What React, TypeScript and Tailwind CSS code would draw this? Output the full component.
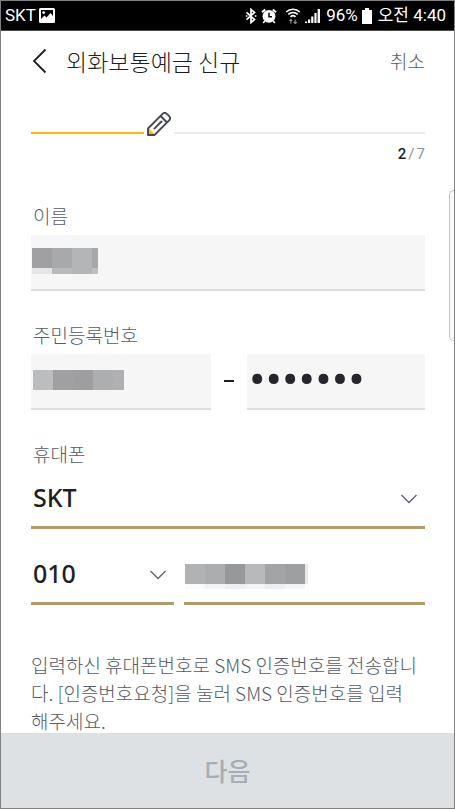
import { useState } from 'react';
import type { ReactNode } from 'react';

interface MosaicProps {
  rows: { height: string; cells: string[] }[];
}

// Pixelated blocks that hide personal data in a field
function Mosaic({ rows }: MosaicProps) {
  return (
    <span className="flex flex-col shrink-0" aria-hidden="true">
      {rows.map((row, i) => (
        <span key={i} className={`flex ${row.height}`}>
          {row.cells.map((cell, j) => (
            <span key={j} className={`h-full ${cell}`} />
          ))}
        </span>
      ))}
    </span>
  );
}

const nameMosaic = [
  { height: 'h-5', cells: ['w-5 bg-[#a0a0a2]', 'w-5 bg-[#a8a9ab]', 'w-5 bg-[#b4b5b7]', 'w-1.5 bg-[#a7a8aa]'] },
  { height: 'h-1.5', cells: ['w-5 bg-[#e5e5e5]', 'w-5 bg-[#b9babc]', 'w-5 bg-[#b4b5b7]', 'w-1.5 bg-[#bebfc1]'] },
];

const idMosaic = [
  {
    height: 'h-5',
    cells: ['w-5 bg-[#bcbdbf]', 'w-5 bg-[#a0a0a2]', 'w-5 bg-[#9e9ea0]', 'w-5 bg-[#adaeb0]', 'w-[11px] bg-[#b0b0b2]'],
  },
];

const phoneMosaic = [
  {
    height: 'h-5',
    cells: [
      'w-5 bg-[#b1b2b4]',
      'w-5 bg-[#acadaf]',
      'w-5 bg-[#979899]',
      'w-5 bg-[#b8b9bb]',
      'w-5 bg-[#a3a4a6]',
      'w-5 bg-[#9e9fa0]',
      'w-[3px] bg-[#e8e9e9]',
    ],
  },
  {
    height: 'h-[5px]',
    cells: [
      'w-5 bg-[#fafafa]',
      'w-5 bg-[#f4f4f4]',
      'w-5 bg-[#eeeeee]',
      'w-5 bg-[#f3f3f3]',
      'w-5 bg-[#eeeeee]',
      'w-5 bg-[#f4f4f4]',
    ],
  },
];

function StatusBar() {
  return (
    <div className="h-[30px] shrink-0 bg-black border-b border-[#4a4a4a] text-white flex items-center justify-between pl-1 pr-2 text-[17px] font-[Roboto,'Noto_Sans_CJK_KR',sans-serif] whitespace-nowrap">
      <div className="flex items-center gap-[3px]">
        <span>SKT</span>
        <svg width="16" height="15" viewBox="0 0 16 15">
          <path
            fill="#fff"
            fillRule="evenodd"
            d="M1.5 0h13A1.5 1.5 0 0 1 16 1.5v12a1.5 1.5 0 0 1-1.5 1.5h-13A1.5 1.5 0 0 1 0 13.5v-12A1.5 1.5 0 0 1 1.5 0zM2 2v9l3.500-3.500 2 2 4-4.500 2.500 3V2z"
          />
          <circle cx="4.700" cy="4.600" r="1.400" fill="#fff" />
        </svg>
      </div>
      <div className="flex items-center gap-1">
        <svg width="12" height="16" viewBox="0 0 12 16" fill="none" stroke="#fff" strokeWidth="1.700">
          <path d="M1.500 4.300l8 7.200L6 14.600V1.400l3.500 3.100-8 7.200" />
          <path d="M.8 8h1.600M9.800 8h1.600" />
        </svg>
        <svg width="16" height="16" viewBox="0 0 16 16" fill="none" stroke="#fff">
          <circle cx="8" cy="8.300" r="6.400" fill="#fff" stroke="none" />
          <path d="M1 4.200L4.200 1.400M15 4.200l-3.200-2.800" strokeWidth="2" />
          <path d="M3.800 13l-1.600 2M12.200 13l1.600 2" strokeWidth="1.600" />
          <path d="M8 4.800v3.900h3" stroke="#000" strokeWidth="1.500" />
        </svg>
        <svg className="ml-1" width="16" height="16" viewBox="0 0 16 16" fill="none" stroke="#fff" strokeWidth="1.600">
          <path d="M1.200 4a9.600 9.600 0 0 1 13.600 0" />
          <path d="M3.300 6.400a6.700 6.700 0 0 1 9.400 0" />
          <path d="M5.500 8.800a3.600 3.600 0 0 1 5 0" />
          <path
            d="M5.800 15.500v-4M4.300 12.900l1.500-1.500 1.500 1.500M10.200 11.500v4M8.700 14l1.500 1.500 1.500-1.500"
            stroke="#888"
            strokeWidth="1.200"
          />
        </svg>
        <svg width="17" height="16" viewBox="0 0 17 16" fill="#fff">
          <path d="M0 13.500h2V15H0zM3 11.500h2.200V15H3zM6.200 8.500h2.200V15H6.200zM9.400 5h2.200v10H9.400zM12.600 1H15v14h-2.400z" />
        </svg>
        <span>96%</span>
        <svg width="10" height="16" viewBox="0 0 10 16" fill="#fff">
          <path d="M3 0h4v2h3v14H0V2h3z" />
        </svg>
        <span className="ml-0.5">오전 4:40</span>
      </div>
    </div>
  );
}

function Header() {
  return (
    <header className="h-15 shrink-0 flex items-center pl-[30px] pr-[29px]">
      <button type="button" aria-label="뒤로" className="w-[35px] h-8 flex items-center">
        <svg width="18" height="26" viewBox="0 0 18 26" fill="none" stroke="#1d1f24" strokeWidth="1.800">
          <path d="M14.500 1.500L3 13l11.500 11.500" />
        </svg>
      </button>
      <h1 className="flex-1 text-[23px] font-light text-[#1d1f24]">외화보통예금 신규</h1>
      <button type="button" className="text-[19px] font-light text-[#565b65]">
        취소
      </button>
    </header>
  );
}

function PencilIcon() {
  return (
    <svg
      className="mx-[3px] shrink-0"
      width="24"
      height="24"
      viewBox="0 0 24 24"
      fill="none"
      stroke="#45484f"
      strokeWidth="1.900"
      strokeLinejoin="round"
    >
      <path d="M1 15.500L8.500 23H1z" fill="#ffbc00" stroke="none" />
      <path d="M1 16.500L15.600 1.900a3 3 0 0 1 4.200 0l2.300 2.300a3 3 0 0 1 0 4.200L7.500 23H1z" />
      <path d="M13.500 4l6.500 6.500" />
      <path d="M7.400 16.600l7.100-7.100" strokeLinecap="round" />
    </svg>
  );
}

function Chevron() {
  return (
    <svg
      className="absolute right-2 top-1/2 -translate-y-1/2 pointer-events-none"
      width="16"
      height="10"
      viewBox="0 0 16 10"
      fill="none"
      stroke="#5f636c"
      strokeWidth="1.300"
    >
      <path d="M.5 1L8 8.500 15.500 1" />
    </svg>
  );
}

interface SelectFieldProps {
  id: string;
  label?: string;
  value: string;
  options: string[];
  onChange: (value: string) => void;
}

function SelectField({ id, label, value, options, onChange }: SelectFieldProps) {
  return (
    <div className="relative h-[58px] border-b-3 border-[#b29a6b]">
      <select
        id={id}
        aria-label={label}
        value={value}
        onChange={(e) => onChange(e.target.value)}
        className="appearance-none w-full h-full pl-0.5 pb-0.5 bg-transparent outline-none text-[25px] font-medium text-[#1d1f24] font-['Noto_Sans','Noto_Sans_CJK_KR',sans-serif]"
      >
        {options.map((option) => (
          <option key={option}>{option}</option>
        ))}
      </select>
      <Chevron />
    </div>
  );
}

interface FieldLabelProps {
  htmlFor: string;
  children: ReactNode;
}

function FieldLabel({ htmlFor, children }: FieldLabelProps) {
  return (
    <label htmlFor={htmlFor} className="block pl-0.5 text-[19px] leading-7 font-light text-[#565b65]">
      {children}
    </label>
  );
}

export default function App() {
  const [carrier, setCarrier] = useState('SKT');
  const [prefix, setPrefix] = useState('010');

  return (
    <div className="h-dvh flex flex-col relative bg-white border border-[#808080] font-['Noto_Sans_CJK_KR',sans-serif]">
      <StatusBar />
      <Header />

      <main className="flex-1 min-h-0 overflow-y-auto [scrollbar-width:none] pl-[30px] pr-[29px] pt-[21px]">
        <div className="flex items-end">
          <div className="w-2/7 h-0.5 mb-0.5 bg-[#ffb90a]" />
          <PencilIcon />
          <div className="flex-1 h-0.5 mb-0.5 bg-[#e9edf0]" />
        </div>
        <p className="mt-2 flex justify-end gap-0.5 text-[15px] leading-5 text-[#8d939d] font-[Roboto,sans-serif]">
          <span className="font-medium text-[#1d1f24]">2</span>
          <span>/</span>
          <span>7</span>
        </p>

        <form className="mt-[38px] flex flex-col gap-[30px]">
          <div className="flex flex-col gap-[5px]">
            <FieldLabel htmlFor="name">이름</FieldLabel>
            <div className="h-14 flex items-center pl-px pb-0.5 bg-[#f6f6f6] border-b-2 border-[#d9dee2]">
              <Mosaic rows={nameMosaic} />
              <input id="name" type="text" className="flex-1 min-w-0 h-full bg-transparent outline-none" />
            </div>
          </div>

          <div className="flex flex-col gap-[5px]">
            <FieldLabel htmlFor="id-front">주민등록번호</FieldLabel>
            <div className="flex items-center">
              <div className="flex-1 min-w-0 h-14 flex items-center pl-0.5 pb-0.5 bg-[#f6f6f6] border-b-2 border-[#d9dee2]">
                <Mosaic rows={idMosaic} />
                <input id="id-front" type="text" className="flex-1 min-w-0 h-full bg-transparent outline-none" />
              </div>
              <span className="w-9 pb-0.5 flex justify-center">
                <span className="w-2.5 h-0.5 bg-[#1d1f24]" />
              </span>
              <div className="flex-1 min-w-0 h-14 pb-0.5 bg-[#f6f6f6] border-b-2 border-[#d9dee2]">
                <input
                  type="password"
                  aria-label="주민등록번호 뒷자리"
                  defaultValue="0000000"
                  className="w-full h-full pl-0.5 bg-transparent outline-none text-[49px] leading-none text-[#25272c] font-[Roboto,sans-serif]"
                />
              </div>
            </div>
          </div>

          <div className="flex flex-col">
            <FieldLabel htmlFor="carrier">휴대폰</FieldLabel>
            <div className="mt-[3px] flex flex-col gap-[18px]">
              <SelectField id="carrier" value={carrier} options={['SKT', 'KT', 'LG U+']} onChange={setCarrier} />
              <div className="flex gap-2.5">
                <div className="w-4/11 shrink-0">
                  <SelectField
                    id="prefix"
                    label="휴대폰 앞자리"
                    value={prefix}
                    options={['010', '011', '016', '017', '019']}
                    onChange={setPrefix}
                  />
                </div>
                <div className="flex-1 min-w-0 h-[58px] flex items-center pl-px pt-1 border-b-3 border-[#b29a6b]">
                  <Mosaic rows={phoneMosaic} />
                  <input
                    type="tel"
                    aria-label="휴대폰 번호"
                    className="flex-1 min-w-0 h-full bg-transparent outline-none"
                  />
                </div>
              </div>
            </div>
          </div>
        </form>

        <p className="mt-[46px] pr-1.5 text-[19px] leading-7 font-light text-[#565b65] break-all">
          입력하신 휴대폰번호로 SMS 인증번호를 전송합니다. [인증번호요청]을 눌러 SMS 인증번호를 입력해주세요.
        </p>
      </main>

      <button type="button" className="h-[75px] shrink-0 bg-[#dde1e4] text-[25px] font-medium text-[#a6adb6]">
        다음
      </button>

      {/* edge panel handle */}
      <div className="absolute right-0 top-[189px] w-[5px] h-[151px] rounded-l-md border border-r-0 border-[#c4c4c4] bg-[#fafafa]" />
    </div>
  );
}
